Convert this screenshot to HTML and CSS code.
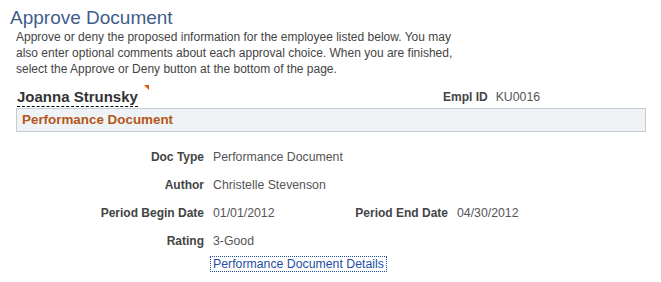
FILE: index.html
```html
<!DOCTYPE html>
<html lang="en">
<head>
    <meta charset="UTF-8">
    <meta name="viewport" content="width=device-width, initial-scale=1.0">
    <title>Approve Document</title>
    <link rel="stylesheet" href="styles.css">
</head>
<body>
    <h1 class="page-title">Approve Document</h1>
    <p class="instructions">
        Approve or deny the proposed information for the employee listed below. You may<br>
        also enter optional comments about each approval choice. When you are finished,<br>
        select the Approve or Deny button at the bottom of the page.
    </p>

    <div class="employee-row">
        <div class="employee-name-cell">
            <span class="employee-name">Joanna Strunsky<span class="flag"></span></span>
        </div>
        <div class="empl-id">
            <span class="field-label">Empl ID</span>
            <span class="field-value">KU0016</span>
        </div>
    </div>

    <div class="section-header">Performance Document</div>

    <div class="fields">
        <span class="field-label">Doc Type</span>
        <span class="field-value span-3">Performance Document</span>

        <span class="field-label">Author</span>
        <span class="field-value span-3">Christelle Stevenson</span>

        <span class="field-label">Period Begin Date</span>
        <span class="field-value">01/01/2012</span>
        <span class="field-label">Period End Date</span>
        <span class="field-value">04/30/2012</span>

        <span class="field-label">Rating</span>
        <span class="field-value span-3">3-Good</span>

        <span></span>
        <a class="details-link span-3" href="#">Performance Document Details</a>
    </div>
</body>
</html>
```

FILE: styles.css
```css
body {
    margin: 0;
    padding: 0 10px 0 8px;
    font-family: 'Liberation Sans', Arial, sans-serif;
    font-size: 12px;
    color: #333;
    background: #fff;
}

.page-title {
    margin: 0;
    padding: 7px 0 0 2px;
    font-size: 19px;
    font-weight: normal;
    line-height: 22px;
    color: #3f5d8a;
}

.instructions {
    margin: 0 0 0 8px;
    line-height: 16px;
    color: #444;
}

.employee-row {
    display: flex;
    align-items: center;
    margin-top: 10px;
    padding-left: 9px;
    height: 20px;
}

.employee-name-cell {
    width: 426px;
}

.employee-name {
    display: inline-block;
    position: relative;
    font-size: 15px;
    line-height: 17px;
    font-weight: bold;
    color: #333;
    border-bottom: 1px dashed #000;
    padding-bottom: 1px;
}

.flag {
    position: absolute;
    top: -3px;
    right: -11px;
    width: 0;
    height: 0;
    border-top: 5px solid #e05206;
    border-left: 5px solid transparent;
}

.empl-id {
    display: flex;
    gap: 8px;
}

.section-header {
    margin: 1px 0 0 8px;
    width: 623px;
    height: 22px;
    line-height: 22px;
    padding-left: 5px;
    background: #f0f3f5;
    border: 1px solid #c9cdd1;
    font-size: 13.4px;
    font-weight: bold;
    color: #b5561b;
}

.fields {
    display: grid;
    grid-template-columns: 196px 130px 96px auto;
    column-gap: 9px;
    row-gap: 14px;
    margin-top: 18px;
    line-height: 14px;
}

.field-label {
    font-weight: bold;
    color: #444;
    text-align: right;
}

.field-value {
    color: #555;
    font-size: 12.3px;
}

.span-3 {
    grid-column: span 3;
}

.details-link {
    justify-self: start;
    margin: -6px 0 0 -3px;
    padding: 0 2px;
    font-size: 12.3px;
    line-height: 14px;
    border: 1px dotted #1f4ea5;
    color: #1f4ea5;
    text-decoration: none;
}
```
